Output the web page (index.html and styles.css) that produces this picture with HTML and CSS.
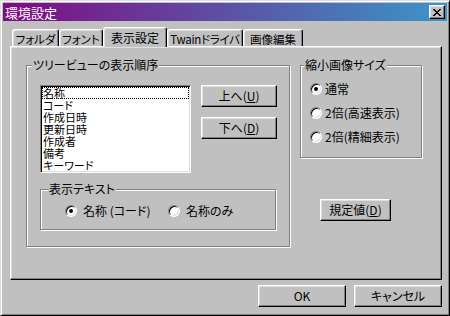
FILE: index.html
```html
<!DOCTYPE html>
<html lang="ja">
<head>
  <meta charset="UTF-8">
  <title>環境設定</title>
  <link rel="stylesheet" href="styles.css">
</head>
<body>
  <div class="window">
    <div class="titlebar">
      <span class="title">環境設定</span>
      <button class="close">
        <svg width="8" height="7" viewBox="0 0 8 7"><path d="M0 0h2v1h1v1h2v-1h1v-1h2v1h-1v1h-1v1h-1v1h1v1h1v1h1v1h-2v-1h-1v-1h-2v1h-1v1h-2v-1h1v-1h1v-1h1v-1h-1v-1h-1z" fill="#000"/></svg>
      </button>
    </div>
    <div class="content">
      <div class="tabs">
        <div class="tab tab-folder">フォルダ</div>
        <div class="tab tab-font">フォント</div>
        <div class="tab tab-view active">表示設定</div>
        <div class="tab tab-twain">Twainドライバ</div>
        <div class="tab tab-edit">画像編集</div>
      </div>
      <div class="panel">
        <fieldset class="group group-order">
          <legend>ツリービューの表示順序</legend>
          <div class="order-body">
            <div class="order-row">
              <ul class="listbox">
                <li class="focused">名称</li>
                <li>コード</li>
                <li>作成日時</li>
                <li>更新日時</li>
                <li>作成者</li>
                <li>備考</li>
                <li>キーワード</li>
              </ul>
              <div class="order-buttons">
                <button class="btn">上へ(<u>U</u>)</button>
                <button class="btn">下へ(<u>D</u>)</button>
              </div>
            </div>
            <fieldset class="group group-text">
              <legend>表示テキスト</legend>
              <div class="text-options">
                <label class="radio"><span class="radio-box checked"></span>名称 (コード)</label>
                <label class="radio"><span class="radio-box"></span>名称のみ</label>
              </div>
            </fieldset>
          </div>
        </fieldset>
        <div class="side">
          <fieldset class="group group-size">
            <legend>縮小画像サイズ</legend>
            <div class="size-options">
              <label class="radio"><span class="radio-box checked"></span>通常</label>
              <label class="radio"><span class="radio-box"></span>2倍(高速表示)</label>
              <label class="radio"><span class="radio-box"></span>2倍(精細表示)</label>
            </div>
          </fieldset>
          <button class="btn btn-default">規定値(<u>D</u>)</button>
        </div>
      </div>
      <div class="footer">
        <button class="btn">OK</button>
        <button class="btn">キャンセル</button>
      </div>
    </div>
  </div>
</body>
</html>
```

FILE: styles.css
```css
* {
  box-sizing: border-box;
}
body {
  margin: 0;
  background-color: #c0c0c0;
  font-family: "Noto Sans CJK JP", sans-serif;
  font-size: 12px;
  line-height: 12px;
  font-feature-settings: "palt";
  color: #000;
}
.window {
  width: 450px;
  height: 316px;
  padding: 2px;
  border: 1px solid;
  border-color: #dfdfdf #000 #000 #dfdfdf;
  box-shadow: inset 1px 1px #fff, inset -1px -1px #808080;
  background: #c0c0c0;
}
.titlebar {
  height: 18px;
  display: flex;
  align-items: center;
  justify-content: space-between;
  padding: 0 2px 0 2px;
  background: linear-gradient(to right, #800a84, #3a96c8);
  color: #fff;
}
.title {
  font-size: 13px;
  line-height: 13px;
}
.close {
  width: 16px;
  height: 14px;
  padding: 0;
  border: 1px solid;
  border-color: #fff #000 #000 #fff;
  box-shadow: inset -1px -1px #808080, inset 1px 1px #dfdfdf;
  background: #c0c0c0;
  display: flex;
  align-items: center;
  justify-content: center;
}
.content {
  padding: 6px 5px 0 7px;
}

/* tabs */
.tabs {
  display: flex;
  align-items: flex-end;
  height: 19px;
  padding-left: 2px;
}
.tab {
  height: 17px;
  padding-top: 3px;
  border: 1px solid;
  border-bottom: none;
  border-color: #fff #000 #000 #fff;
  border-radius: 3px 3px 0 0;
  box-shadow: inset -1px 0 #808080, inset 1px 1px #dfdfdf;
  text-align: center;
  white-space: nowrap;
  font-size: 11.5px;
  overflow: hidden;
}
.tab-folder { width: 47px; }
.tab-font { width: 44px; }
.tab-view { width: 64px; }
.tab-twain { width: 76px; letter-spacing: -0.3px; }
.tab-edit { width: 60px; }
.tab.active {
  height: 20px;
  padding-top: 4px;
  margin-bottom: -1px;
  position: relative;
  z-index: 1;
  background: #c0c0c0;
  font-size: 12px;
}
.panel {
  height: 234px;
  display: flex;
  align-items: flex-start;
  padding: 12px 0 0 15px;
  border: 1px solid;
  border-color: #fff #000 #000 #fff;
  box-shadow: inset -1px -1px #808080, inset 1px 1px #dfdfdf;
}

/* group boxes */
.group {
  margin: 0;
  padding: 0;
  min-width: 0;
  border: 1px solid #808080;
  box-shadow: inset 1px 1px #fff, 1px 1px #fff;
}
.group legend {
  padding: 0 1px;
  line-height: 12px;
  background: #c0c0c0;
}
.group-order {
  width: 264px;
}
.group-order > legend {
  margin-left: 5px;
}
.order-body {
  padding: 14px 0 16px 13px;
}
.order-row {
  display: flex;
  align-items: flex-start;
}
.listbox {
  list-style: none;
  margin: 0;
  padding: 1px;
  width: 151px;
  height: 88px;
  background: #fff;
  border: 1px solid;
  border-color: #808080 #fff #fff #808080;
  box-shadow: inset 1px 1px #000, inset -1px -1px #dfdfdf;
  font-size: 11px;
}
.listbox li {
  height: 12px;
  line-height: 12px;
  padding-left: 1px;
}
.listbox .focused {
  outline: 1px dotted #000;
  outline-offset: -1px;
}
.order-buttons {
  display: flex;
  flex-direction: column;
  gap: 10px;
  margin-left: 10px;
}
.btn {
  font: inherit;
  font-feature-settings: "palt";
  color: #000;
  background: #c0c0c0;
  height: 22px;
  padding: 0;
  border: 1px solid;
  border-color: #fff #000 #000 #fff;
  box-shadow: inset -1px -1px #808080, inset 1px 1px #dfdfdf;
}
.order-buttons .btn {
  width: 76px;
}
.group-text {
  width: 236px;
  margin-top: 10px;
}
.group-text > legend {
  margin-left: 7px;
}
.text-options {
  display: flex;
  padding: 10px 0 12px 24px;
}
.text-options .radio {
  width: 103px;
}

/* radios */
.radio {
  display: flex;
  align-items: center;
  gap: 6px;
  height: 12px;
  white-space: nowrap;
}
.radio-box {
  flex: none;
  width: 12px;
  height: 12px;
  display: flex;
  align-items: center;
  justify-content: center;
  border-radius: 50%;
  background: #fff;
  border: 1px solid;
  border-color: #808080 #fff #fff #808080;
  box-shadow: inset 1px 1px #000, inset -1px -1px #dfdfdf;
}
.radio-box.checked::after {
  content: "";
  width: 4px;
  height: 4px;
  border-radius: 50%;
  background: #000;
}

.side {
  display: flex;
  flex-direction: column;
  align-items: flex-start;
  margin-left: 10px;
}
.group-size {
  width: 122px;
}
.group-size > legend {
  margin-left: 3px;
}
.size-options {
  display: flex;
  flex-direction: column;
  gap: 12px;
  padding: 12px 0 14px 9px;
}
.size-options .radio {
  gap: 3px;
}
.btn-default {
  width: 71px;
  margin: 41px 0 0 20px;
}

.footer {
  display: flex;
  justify-content: flex-end;
  gap: 8px;
  padding-top: 5px;
}
.footer .btn {
  width: 88px;
}
```
